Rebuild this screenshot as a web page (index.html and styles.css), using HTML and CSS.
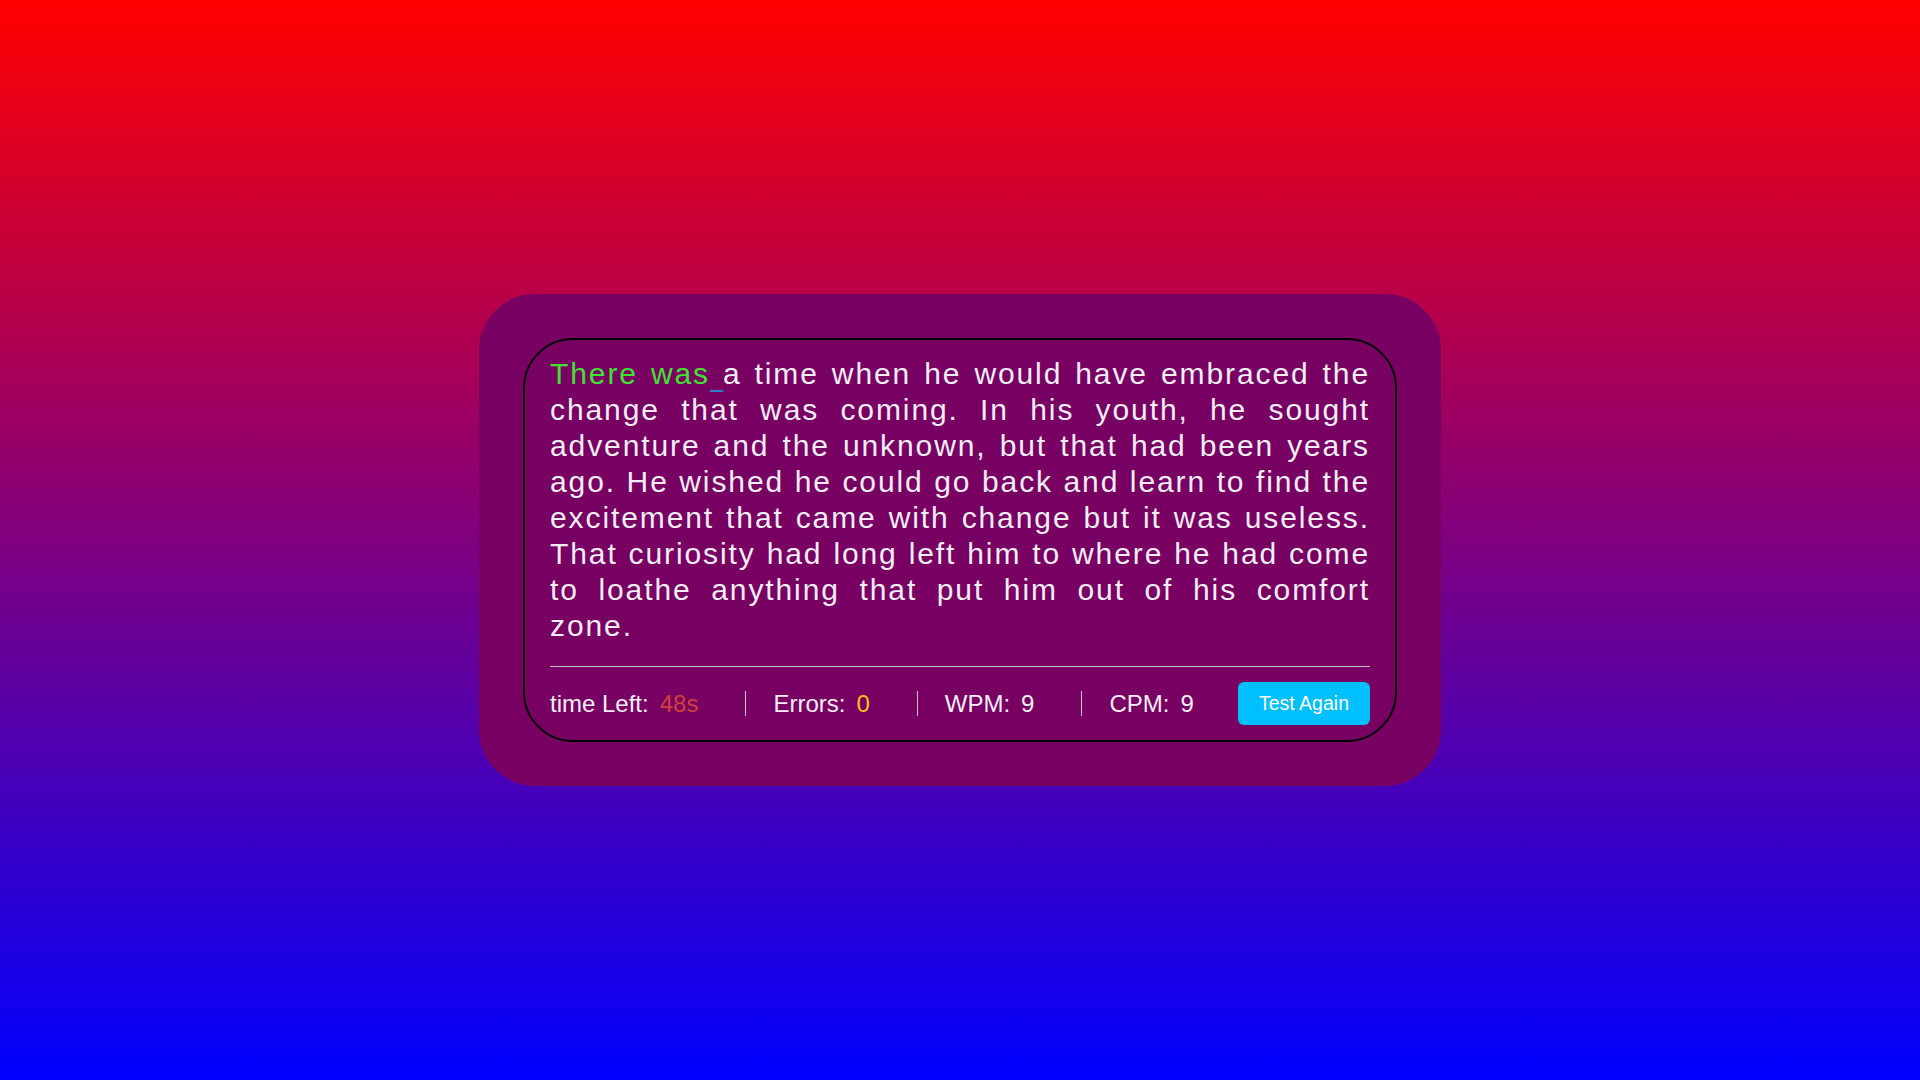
FILE: index.html
```html
<!DOCTYPE html>
<html lang="en">
<head>
<meta charset="utf-8">
<title>Typing Test</title>
<link rel="stylesheet" href="styles.css">
</head>
<body>
<main class="card">
  <section class="box">
    <p class="passage"><span class="typed">There was</span><span class="caret"> </span>a time when he would have embraced the change that was coming. In his youth, he sought adventure and the unknown, but that had been years ago. He wished he could go back and learn to find the excitement that came with change but it was useless. That curiosity had long left him to where he had come to loathe anything that put him out of his comfort zone.</p>
    <hr class="rule">
    <div class="stats">
      <div class="stat"><span class="label">time Left:</span><span class="value time">48s</span></div>
      <div class="stat"><span class="label">Errors:</span><span class="value errors">0</span></div>
      <div class="stat"><span class="label">WPM:</span><span class="value">9</span></div>
      <div class="stat last"><span class="label">CPM:</span><span class="value">9</span></div>
      <button class="again">Test Again</button>
    </div>
  </section>
</main>
</body>
</html>
```
FILE: styles.css
```css
* { box-sizing: border-box; }
html, body { height: 100%; }
body {
  margin: 0;
  background: linear-gradient(#ff0000, #0000ff);
  display: flex;
  align-items: center;
  justify-content: center;
  font-family: "Liberation Sans", Arial, sans-serif;
}
.card {
  width: 962px;
  padding: 44px;
  background: #770062;
  border-radius: 56px;
}
.box {
  border: 2px solid #000;
  border-radius: 50px;
  padding: 16px 25px 15px;
}
.passage {
  margin: 0;
  font-size: 30px;
  line-height: 36px;
  letter-spacing: 1.9px;
  text-align: justify;
  color: #f2edf6;
}
.typed { color: #42e232; }
.caret { border-bottom: 2px solid #2b7fd0; }
.rule {
  margin: 22px 0 15px;
  border: 0;
  border-top: 1px solid #c4c4c4;
  height: 0;
}
.stats {
  display: flex;
  align-items: center;
  font-size: 24px;
  color: #f2edf6;
}
.stat {
  display: flex;
  align-items: center;
  height: 25px;
  padding-right: 47px;
  margin-right: 27px;
  border-right: 1px solid #c4c4c4;
}
.stat.last { border-right: 0; padding-right: 0; margin-right: 0; }
.value { margin-left: 11px; }
.time { color: #d0413c; }
.errors { color: #fbc11a; }
.again {
  margin-left: auto;
  height: 43px;
  width: 132px;
  padding: 0;
  border: 0;
  border-radius: 6px;
  background: #00bfff;
  color: #ffffff;
  font-family: "Liberation Sans", Arial, sans-serif;
  font-size: 19.5px;
}
```
